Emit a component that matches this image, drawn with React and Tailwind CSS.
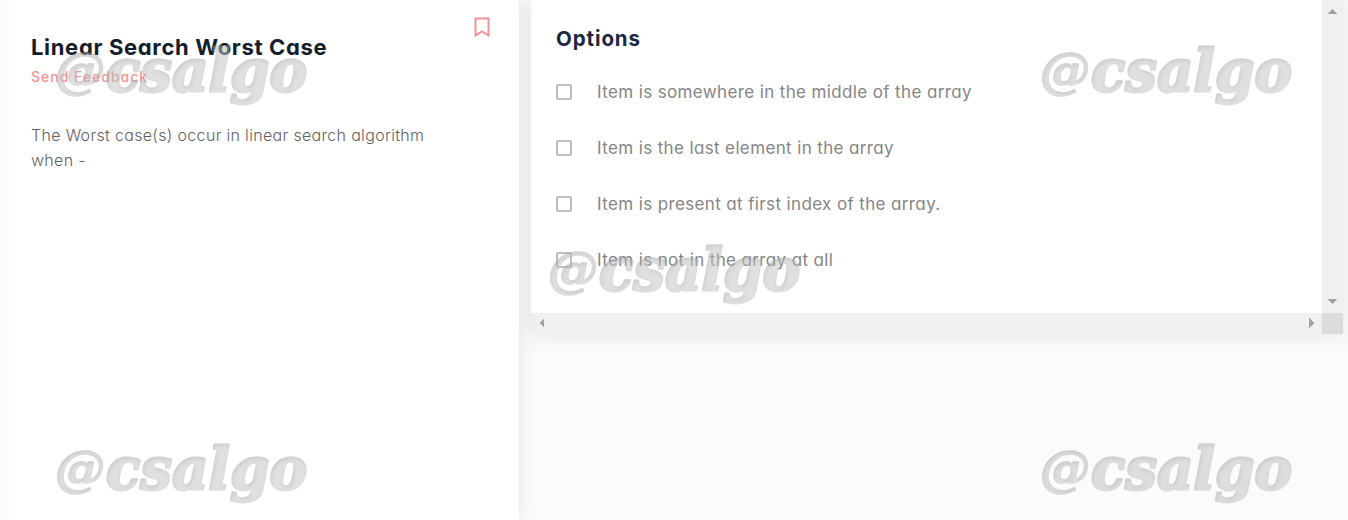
import React from "react";

const options = [
  "Item is somewhere in the middle of the array",
  "Item is the last element in the array",
  "Item is present at first index of the array.",
  "Item is not in the array at all",
];

function Watermark({ className }) {
  return (
    <svg className={`pointer-events-none absolute z-20 h-[80px] w-[260px] ${className}`} viewBox="0 0 260 80">
      <defs>
        <filter id="inset" x="-5%" y="-5%" width="110%" height="110%">
          <feOffset in="SourceAlpha" dx="1" dy="1.5" result="shifted" />
          <feGaussianBlur in="shifted" stdDeviation="2" result="soft" />
          <feComposite in="SourceAlpha" in2="soft" operator="out" result="edge" />
          <feFlood floodColor="#555" floodOpacity="0.5" />
          <feComposite in2="edge" operator="in" result="shade" />
          <feMerge>
            <feMergeNode in="SourceGraphic" />
            <feMergeNode in="shade" />
          </feMerge>
        </filter>
      </defs>
      <g opacity="0.52">
        <g filter="url(#inset)" fill="#c4c4c4" stroke="#c4c4c4" strokeLinejoin="round" fontFamily="'DejaVu Serif', serif" fontWeight="700" fontStyle="italic">
          <text x="-1" y="47" fontSize="49" strokeWidth="1.5" textLength="50" lengthAdjust="spacingAndGlyphs">@</text>
          <text x="50" y="50" fontSize="58" strokeWidth="2.8" textLength="201" lengthAdjust="spacingAndGlyphs">csalgo</text>
        </g>
      </g>
    </svg>
  );
}

function Arrow({ points }) {
  return (
    <svg className="size-[10px] shrink-0" viewBox="0 0 10 10" fill="#a3a3a3" shapeRendering="crispEdges">
      <polygon points={points} />
    </svg>
  );
}

export default function App() {
  return (
    <div className="relative flex h-[520px] w-[1348px] gap-3 overflow-hidden bg-[#fbfbfb] font-['Inter',sans-serif] [font-feature-settings:'cv11']">
      <section className="z-10 h-full w-[519px] shrink-0 bg-white bg-linear-to-r from-[#fafafa] to-white to-[16px] pt-[17px] pr-[29px] pl-[31px] shadow-[0_0_18px_rgba(0,0,0,0.1)]">
        <div className="flex justify-between">
          <div className="pt-[15px]">
            <h1 className="text-[22px] leading-[30px] font-bold tracking-[0.67px] whitespace-nowrap text-[#141d2b]">Linear Search Worst Case</h1>
            <a className="block text-[14px] leading-[29px] font-medium tracking-[1px] text-[#f29493]">Send Feedback</a>
          </div>
          <svg className="h-[21px] w-4" viewBox="0 0 16 21" fill="none" stroke="#f09394" strokeWidth="2">
            <path d="M1.500 1.500h13v17L8 14.500l-6.500 4z" />
          </svg>
        </div>
        <p className="mt-[32px] text-[16px] leading-[25px] font-[350] tracking-[0.32px] whitespace-nowrap text-[#5f5f5f]">
          The Worst case(s) occur in linear search algorithm
          <br />
          when -
        </p>
      </section>
      <section className="grid h-[334px] w-[812px] shrink-0 grid-cols-[791px_21px] grid-rows-[313px_21px] bg-white shadow-[0_0_22px_rgba(0,0,0,0.1)]">
        <div className="pt-[24px] pl-[25px]">
          <h2 className="text-[20.5px] leading-[30px] font-bold tracking-[0.9px] text-[#1c2740]">Options</h2>
          <div className="mt-[10px] flex flex-col">
            {options.map((option) => (
              <label key={option} className="flex h-14 items-center gap-[25px]">
                <span className="size-4 shrink-0 rounded-[2px] border-2 border-[#bebebe]" />
                <span className="text-[17px] leading-6 tracking-[0.37px] whitespace-nowrap text-[#858585]">{option}</span>
              </label>
            ))}
          </div>
        </div>
        <div className="flex flex-col items-center justify-between bg-[#f0f0f0] py-[7px] pr-px">
          <Arrow points="5,2 10,7 0,7" />
          <Arrow points="0,3 10,3 5,8" />
        </div>
        <div className="flex items-center justify-between bg-[#f0f0f0] px-[6px] pb-px">
          <Arrow points="2,5 7,0 7,10" />
          <Arrow points="3,0 8,5 3,10" />
        </div>
        <div className="bg-[#dcdcdc]" />
      </section>
      <Watermark className="top-[41px] left-[56px]" />
      <Watermark className="top-[41px] left-[1041px]" />
      <Watermark className="top-[240px] left-[549px]" />
      <Watermark className="top-[439px] left-[56px]" />
      <Watermark className="top-[439px] left-[1041px]" />
    </div>
  );
}
